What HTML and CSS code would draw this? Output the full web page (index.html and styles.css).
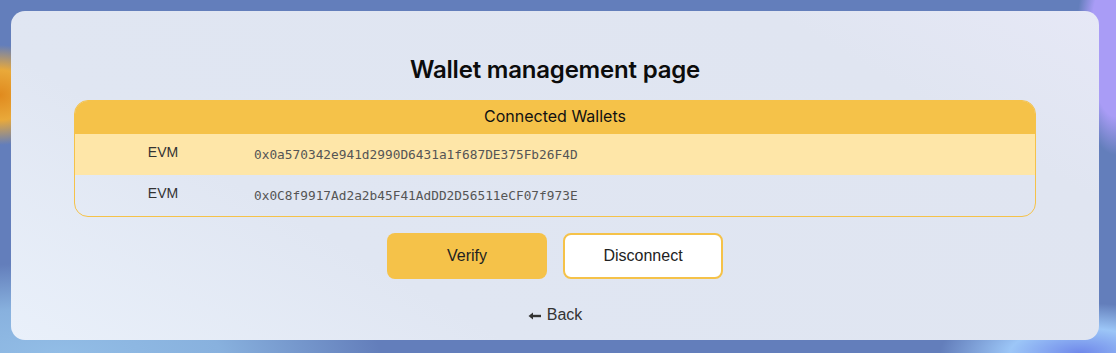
FILE: index.html
```html
<!DOCTYPE html>
<html lang="en">
<head>
    <meta charset="UTF-8">
    <meta name="viewport" content="width=device-width, initial-scale=1.0">
    <title>Wallet management page</title>
    <link rel="stylesheet" href="styles.css">
</head>
<body>
    <div class="backdrop">
        <div class="panel">
            <h1>Wallet management page</h1>
            <div class="wallets">
                <div class="wallets-head">Connected Wallets</div>
                <div class="wallet-row active">
                    <span class="chain">EVM</span>
                    <span class="address">0x0a570342e941d2990D6431a1f687DE375Fb26F4D</span>
                </div>
                <div class="wallet-row">
                    <span class="chain">EVM</span>
                    <span class="address">0x0C8f9917Ad2a2b45F41AdDD2D56511eCF07f973E</span>
                </div>
            </div>
            <div class="actions">
                <button class="btn btn-verify">Verify</button>
                <button class="btn btn-disconnect">Disconnect</button>
            </div>
            <a class="back" href="#">
                <svg class="back-arrow" width="14" height="10" viewBox="0 0 14 10">
                    <path d="M13 5H3" stroke="#333" stroke-width="2.4" fill="none"/>
                    <path d="M0.5 5L5 1.5V8.5Z" fill="#333"/>
                </svg>
                Back
            </a>
        </div>
    </div>
</body>
</html>
```

FILE: styles.css
```css
body {
    margin: 0;
    font-family: "Liberation Sans", Arial, sans-serif;
}

.backdrop {
    width: 1116px;
    height: 353px;
    box-sizing: border-box;
    padding: 11px 17px 13px 11px;
    background:
        radial-gradient(ellipse 60px 50px at 0px 95px, #e08a1e 0%, #e9a93a 50%, rgba(233, 169, 58, 0) 100%),
        radial-gradient(ellipse 40px 110px at 1116px 45px, #a99cf6 0%, #a99cf6 65%, rgba(169, 156, 246, 0) 100%),
        radial-gradient(ellipse 320px 90px at 60px 353px, #92bde6 0%, #88b1de 50%, rgba(136, 177, 222, 0) 100%),
        radial-gradient(ellipse 140px 50px at 1080px 353px, #6f88ea 0%, #9cc6f7 50%, rgba(156, 198, 247, 0) 100%),
        #637ebb;
}

.panel {
    height: 100%;
    box-sizing: border-box;
    border-radius: 14px;
    background: linear-gradient(30deg, #e9f0fa 0%, #e0e6f2 30%, #e0e5f1 80%, #e6e8f6 100%);
    padding: 43px 64px 0 64px;
    display: flex;
    flex-direction: column;
    align-items: center;
}

h1 {
    margin: 0 0 14px 0;
    font-family: Inter, sans-serif;
    font-weight: 600;
    font-size: 24px;
    line-height: 32px;
    color: #0c0c0c;
    letter-spacing: -0.2px;
}

.wallets {
    width: 100%;
    border: 1px solid #f5c249;
    border-radius: 14px;
    overflow: hidden;
}

.wallets-head {
    background-color: #f5c249;
    height: 33px;
    line-height: 31px;
    text-align: center;
    font-family: Inter, sans-serif;
    font-size: 16px;
    color: #111;
}

.wallet-row {
    display: grid;
    grid-template-columns: 176px 1fr;
    align-items: center;
    height: 41px;
}

.wallet-row.active {
    background-color: #fee6a8;
}

.chain {
    text-align: center;
    font-size: 14px;
    color: #333;
    margin-top: -6px;
}

.address {
    padding-left: 3px;
    font-family: "DejaVu Sans Mono", monospace;
    font-size: 12.8px;
    color: #555;
}

.actions {
    display: flex;
    gap: 16px;
    margin-top: 16px;
}

.btn {
    width: 160px;
    height: 46px;
    border-radius: 8px;
    font-family: "Liberation Sans", Arial, sans-serif;
    font-size: 16px;
    color: #222;
    cursor: pointer;
}

.btn-verify {
    background-color: #f5c249;
    border: none;
}

.btn-disconnect {
    background-color: #fff;
    border: 2px solid #f5c249;
}

.back {
    margin-top: 27px;
    font-size: 16px;
    color: #333;
    text-decoration: none;
    display: flex;
    align-items: center;
    gap: 5px;
}

.back-arrow {
    margin-top: 1px;
}
```
